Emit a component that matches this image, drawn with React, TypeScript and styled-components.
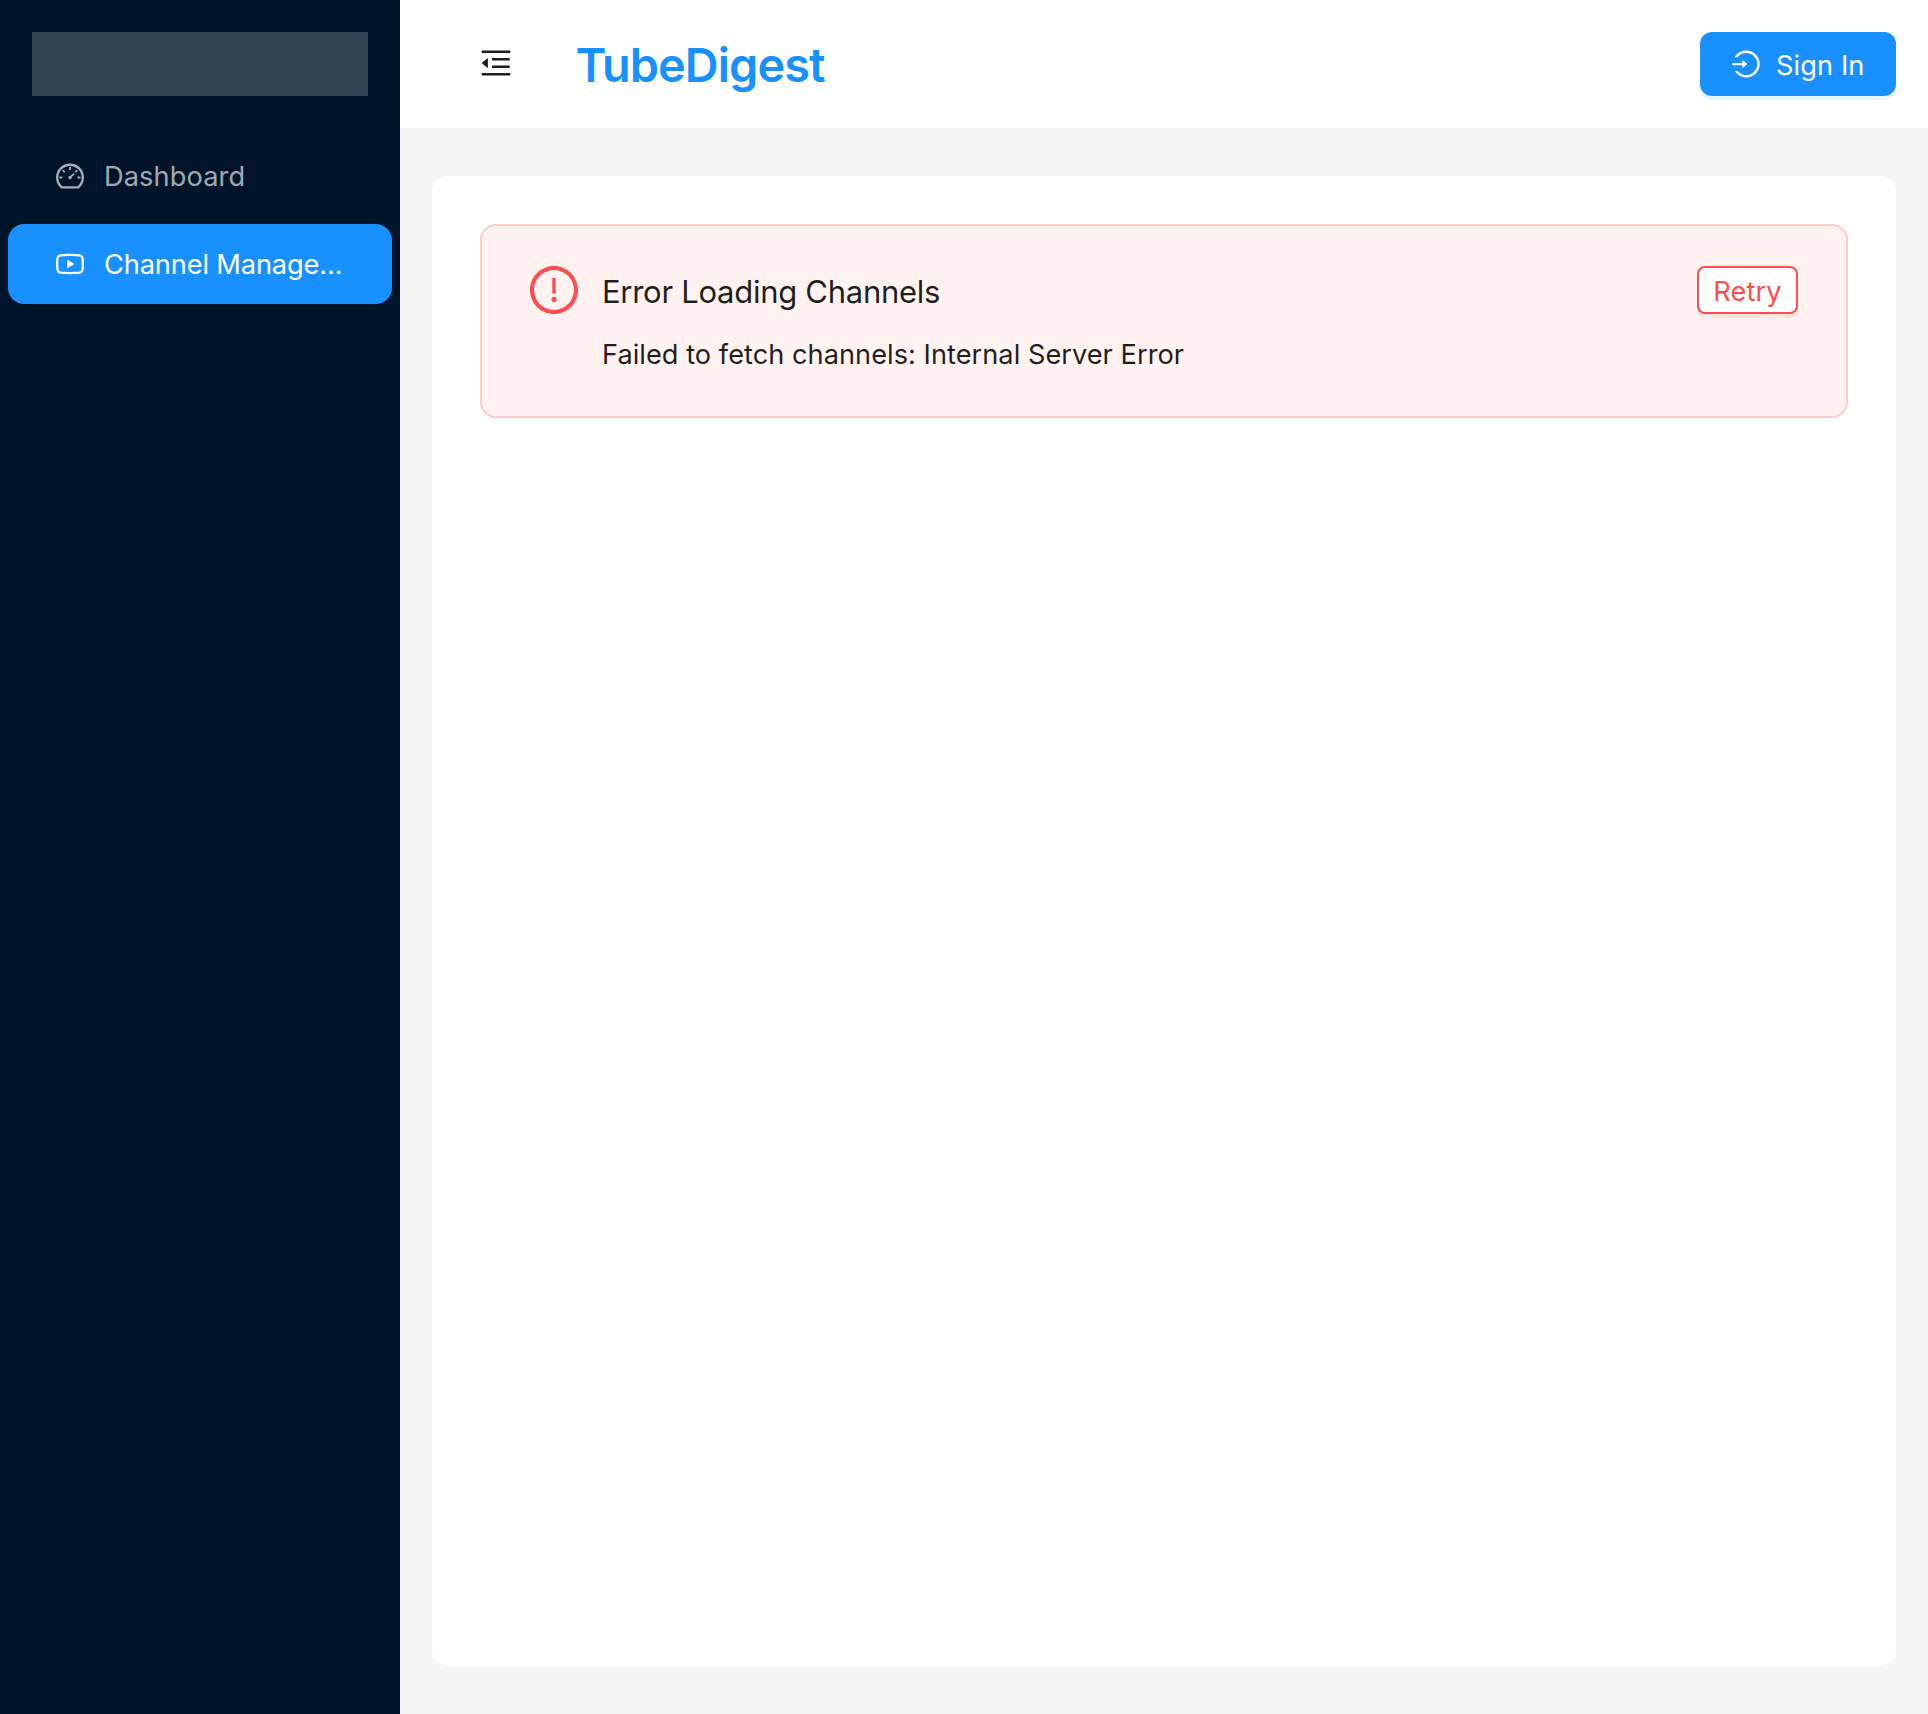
import React from 'react';
import styled, { createGlobalStyle } from 'styled-components';
import {
  AiOutlineDashboard,
  AiOutlineYoutube,
  AiOutlineMenuFold,
  AiOutlineLogin,
  AiOutlineExclamationCircle,
} from 'react-icons/ai';

const GlobalStyle = createGlobalStyle`
  *, *::before, *::after { box-sizing: border-box; }
  body {
    margin: 0;
    font-family: Inter, 'Liberation Sans', sans-serif;
    font-size: 27.2px;
    line-height: 44px;
    color: rgba(0, 0, 0, 0.88);
    background: #f5f5f5;
  }
  svg { display: block; flex: none; }
`;

// Ant glyphs are drawn edge to edge inside this inner box.
const GLYPH_BOX = '64 64 896 896';

const Layout = styled.div`
  display: flex;
  min-height: 100vh;
`;

const Sider = styled.aside`
  width: 400px;
  flex: none;
  background: #001529;
`;

const LogoSlot = styled.div`
  height: 64px;
  margin: 32px;
  background: rgba(255, 255, 255, 0.2);
`;

const Menu = styled.nav`
  display: flex;
  flex-direction: column;
  gap: 8px;
  padding: 8px;
`;

const MenuItem = styled.a<{ $active?: boolean }>`
  display: flex;
  align-items: center;
  gap: 20px;
  height: 80px;
  padding: 0 32px 0 48px;
  border-radius: 16px;
  color: ${(p) => (p.$active ? '#fff' : 'rgba(255, 255, 255, 0.65)')};
  background: ${(p) => (p.$active ? '#1890ff' : 'transparent')};
`;

const Label = styled.span<{ $spacing?: number; $drop?: number }>`
  display: block;
  padding-top: ${(p) => p.$drop ?? 2}px;
  white-space: nowrap;
  letter-spacing: ${(p) => p.$spacing ?? 0}px;
`;

const Main = styled.div`
  display: flex;
  flex: 1;
  flex-direction: column;
  min-width: 0;
`;

const Header = styled.header`
  display: flex;
  align-items: center;
  justify-content: space-between;
  height: 128px;
  padding-right: 32px;
  background: #fff;
`;

const Brand = styled.div`
  display: flex;
  align-items: center;
`;

const CollapseButton = styled.button`
  display: flex;
  align-items: center;
  justify-content: center;
  width: 128px;
  height: 128px;
  margin-left: 32px;
  padding: 0 0 2px;
  border: 0;
  background: transparent;
  color: rgba(0, 0, 0, 0.88);
`;

const Title = styled.h1`
  margin: 0 0 0 15.5px;
  padding-top: 1px;
  font-size: 46.8px;
  font-weight: 600;
  line-height: 64px;
  letter-spacing: -0.9px;
  color: #1890ff;
`;

const SignInButton = styled.button`
  display: flex;
  align-items: center;
  gap: 16px;
  width: 196px;
  height: 64px;
  padding: 0 32px;
  border: 0;
  border-radius: 12px;
  background: #1890ff;
  box-shadow: 0 4px 0 #e6f7ff;
  color: #fff;
  font: inherit;
`;

const Panel = styled.main`
  flex: 1;
  margin: 48px 32px;
  padding: 48px;
  border-radius: 16px;
  background: #fff;
`;

const Alert = styled.section`
  display: flex;
  align-items: flex-start;
  height: 194px;
  padding: 40px 48px;
  border: 2px solid #ffccc7;
  border-radius: 16px;
  background: #fff2f0;
`;

const AlertIcon = styled.span`
  margin-right: 24px;
  color: #ff4d4f;
`;

const AlertBody = styled.div`
  display: flex;
  flex: 1;
  flex-direction: column;
  gap: 14px;
`;

const AlertTitle = styled.div`
  font-size: 31px;
  line-height: 50px;
`;

const RetryButton = styled.button`
  display: flex;
  align-items: center;
  justify-content: center;
  width: 101px;
  height: 48px;
  padding: 0;
  border: 2px solid #ff4d4f;
  border-radius: 8px;
  background: #fff;
  box-shadow: 0 4px 0 rgba(255, 38, 5, 0.06);
  color: #ff4d4f;
  font: inherit;
`;

export default function App() {
  return (
    <Layout>
      <GlobalStyle />
      <Sider>
        <LogoSlot />
        <Menu>
          <MenuItem>
            <AiOutlineDashboard size={28} viewBox={GLYPH_BOX} />
            <Label $spacing={0.1}>Dashboard</Label>
          </MenuItem>
          <MenuItem $active>
            <AiOutlineYoutube size={28} viewBox={GLYPH_BOX} />
            <Label $spacing={-0.13}>Channel Manage...</Label>
          </MenuItem>
        </Menu>
      </Sider>
      <Main>
        <Header>
          <Brand>
            <CollapseButton aria-label="Collapse menu">
              <AiOutlineMenuFold size={32} viewBox={GLYPH_BOX} />
            </CollapseButton>
            <Title>TubeDigest</Title>
          </Brand>
          <SignInButton>
            <AiOutlineLogin size={28} viewBox={GLYPH_BOX} />
            <Label $spacing={0.1} $drop={4}>Sign In</Label>
          </SignInButton>
        </Header>
        <Panel>
          <Alert role="alert">
            <AlertIcon>
              <AiOutlineExclamationCircle size={48} viewBox={GLYPH_BOX} />
            </AlertIcon>
            <AlertBody>
              <AlertTitle>
                <Label $spacing={-0.28} $drop={1}>Error Loading Channels</Label>
              </AlertTitle>
              <Label $spacing={0.03}>Failed to fetch channels: Internal Server Error</Label>
            </AlertBody>
            <RetryButton>
              <Label $spacing={0.1} $drop={4}>Retry</Label>
            </RetryButton>
          </Alert>
        </Panel>
      </Main>
    </Layout>
  );
}
